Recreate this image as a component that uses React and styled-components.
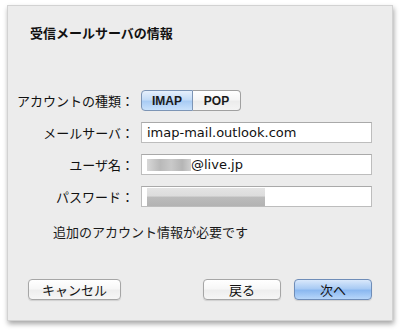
import React from "react";
import styled, { createGlobalStyle } from "styled-components";

const Global = createGlobalStyle`
  html, body { margin: 0; padding: 0; background: #ffffff; }
  body { font-family: "DejaVu Sans", "Noto Sans CJK JP", sans-serif; }
`;

const Page = styled.div`
  width: 400px;
  height: 332px;
  padding: 5px 0 0 7px;
  box-sizing: border-box;
`;

const Panel = styled.div`
  width: 386px;
  height: 316px;
  box-sizing: border-box;
  background: #ececec;
  border: 1px solid #d2d2d2;
  box-shadow: 1px 3px 5px rgba(0, 0, 0, 0.35);
  padding: 19px 20px 0 0;
  display: flex;
  flex-direction: column;
`;

const Title = styled.div`
  font-family: "Noto Sans CJK JP", sans-serif;
  font-weight: 700;
  font-size: 13px;
  line-height: 16px;
  color: #111;
  padding-left: 22px;
`;

const Form = styled.div`
  margin-top: 49px;
  padding-left: 7px;
  display: grid;
  grid-template-columns: 119px 231px;
  grid-auto-rows: 21px;
  column-gap: 7px;
  row-gap: 11px;
  align-items: center;
`;

const Label = styled.div`
  font-family: "Noto Sans CJK JP", sans-serif;
  font-size: 13px;
  line-height: 21px;
  color: #111;
  text-align: right;
  white-space: nowrap;
`;

const Segmented = styled.div`
  display: flex;
  height: 21px;
`;

const Segment = styled.div`
  width: ${(p) => p.$w}px;
  height: 21px;
  box-sizing: border-box;
  display: flex;
  align-items: center;
  justify-content: center;
  font-family: "Liberation Sans", sans-serif;
  font-weight: 700;
  font-size: 12px;
  color: #1a1a1a;
  border: 1px solid #9d9d9d;
  border-left-width: ${(p) => (p.$first ? 1 : 0)}px;
  border-radius: ${(p) => (p.$first ? "4px 0 0 4px" : "0 4px 4px 0")};
  background: ${(p) =>
    p.$on
      ? "linear-gradient(#e6f0fc, #c4dcf7 45%, #a9ccf4 55%, #c9e1fb)"
      : "linear-gradient(#ffffff, #f6f6f6 45%, #ececec 55%, #f4f4f4)"};
  border-color: ${(p) => (p.$on ? "#7d95b5" : "#a0a0a0")};
`;

const Input = styled.div`
  width: 231px;
  height: 21px;
  box-sizing: border-box;
  background: #fff;
  border: 1px solid #bdbdbd;
  border-top-color: #a9a9a9;
  display: flex;
  align-items: center;
  padding-left: 5px;
  font-size: 13px;
  color: #111;
  white-space: nowrap;
  overflow: hidden;
`;

const Blur = styled.span`
  display: inline-block;
  width: ${(p) => p.$w}px;
  height: ${(p) => p.$h}px;
  background: ${(p) => p.$bg};
`;

const Note = styled.div`
  margin-top: 17px;
  padding-left: 45px;
  font-family: "Noto Sans CJK JP", sans-serif;
  font-size: 13px;
  line-height: 16px;
  color: #1a1a1a;
`;

const Buttons = styled.div`
  margin-top: 39px;
  padding-left: 20px;
  display: flex;
  gap: 13px;
`;

const Spacer = styled.div`
  flex: 1;
`;

const Button = styled.div`
  width: ${(p) => p.$w}px;
  height: 21px;
  box-sizing: border-box;
  border-radius: 4px;
  border: 1px solid ${(p) => (p.$primary ? "#6f8db8" : "#a6a6a6")};
  background: ${(p) =>
    p.$primary
      ? "linear-gradient(#d9e8fb, #a9cbf4 45%, #8bb8f0 55%, #b7d6fa)"
      : "linear-gradient(#ffffff, #f7f7f7 45%, #eeeeee 55%, #f6f6f6)"};
  box-shadow: 0 1px 1px rgba(0, 0, 0, 0.12);
  display: flex;
  align-items: center;
  justify-content: center;
  font-family: "Noto Sans CJK JP", sans-serif;
  font-size: 13px;
  color: #111;
`;

export default function App() {
  return (
    <Page>
      <Global />
      <Panel>
        <Title>受信メールサーバの情報</Title>
        <Form>
          <Label>アカウントの種類：</Label>
          <Segmented>
            <Segment $first $on $w={52}>IMAP</Segment>
            <Segment $w={48}>POP</Segment>
          </Segmented>
          <Label>メールサーバ：</Label>
          <Input>imap-mail.outlook.com</Input>
          <Label>ユーザ名：</Label>
          <Input>
            <Blur $w={44} $h={12} $bg="linear-gradient(90deg, #d8d8d8, #b9b9b9 30%, #c9c9c9 55%, #b5b5b5 80%, #d0d0d0)" />
            @live.jp
          </Input>
          <Label>パスワード：</Label>
          <Input>
            <Blur $w={118} $h={18} $bg="linear-gradient(#e4e4e4, #dcdcdc 45%, #bcbcbc 50%, #b3b3b3)" />
          </Input>
        </Form>
        <Note>追加のアカウント情報が必要です</Note>
        <Buttons>
          <Button $w={93}>キャンセル</Button>
          <Spacer />
          <Button $w={78}>戻る</Button>
          <Button $w={78} $primary>次へ</Button>
        </Buttons>
      </Panel>
    </Page>
  );
}
